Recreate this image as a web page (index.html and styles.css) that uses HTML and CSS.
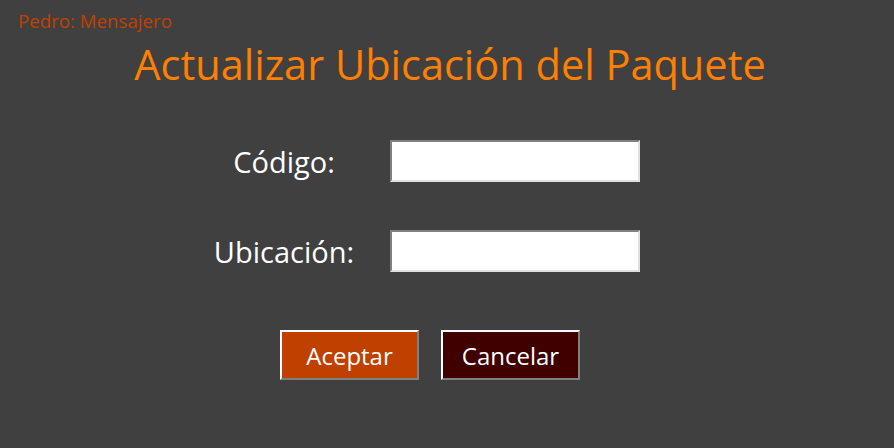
FILE: index.html
```html
<!DOCTYPE html>
<html lang="es">
<head>
<meta charset="utf-8">
<title>Actualizar Ubicación del Paquete</title>
<link rel="stylesheet" href="styles.css">
</head>
<body>
<div class="page">
  <div class="user">Pedro: Mensajero</div>
  <h1 class="title">Actualizar Ubicación del Paquete</h1>
  <form class="form">
    <label class="label" for="codigo">Código:</label>
    <input class="field" id="codigo" type="text">
    <label class="label" for="ubicacion">Ubicación:</label>
    <input class="field" id="ubicacion" type="text">
  </form>
  <div class="actions">
    <button class="btn btn-ok" type="button">Aceptar</button>
    <button class="btn btn-cancel" type="button">Cancelar</button>
  </div>
</div>
</body>
</html>
```

FILE: styles.css
```css
html, body {
  margin: 0;
  padding: 0;
  background: #404040;
  height: 100%;
}
.page {
  font-family: "Open Sans", "Lato", sans-serif;
  display: flex;
  flex-direction: column;
  padding-top: 10px;
}
.user {
  color: #c04000;
  font-size: 18.7px;
  line-height: 22px;
  padding-left: 18px;
}
.title {
  margin: 7px 0 0 0;
  color: #ff7f00;
  font-weight: normal;
  font-size: 41.5px;
  line-height: 50px;
  text-align: center;
  padding-left: 6px;
}
.form {
  margin: 51px 0 0 0;
  padding-left: 198px;
  display: grid;
  grid-template-columns: 172px 250px;
  column-gap: 20px;
  row-gap: 48px;
  align-items: center;
}
.label {
  color: #ffffff;
  font-size: 29px;
  text-align: center;
}
.field {
  box-sizing: border-box;
  width: 250px;
  height: 42px;
  margin: 0;
  background: #ffffff;
  border: 2px solid;
  border-top-color: #808080;
  border-left-color: #808080;
  border-bottom-color: #e0e0e0;
  border-right-color: #e0e0e0;
}
.actions {
  margin-top: 58px;
  padding-left: 280px;
  display: flex;
  gap: 22px;
}
.btn {
  box-sizing: border-box;
  width: 139px;
  height: 50px;
  font-family: inherit;
  font-size: 24px;
  color: #ffffff;
  border: 2px solid;
  border-top-color: #ffffff;
  border-left-color: #ffffff;
  border-bottom-color: #808080;
  border-right-color: #808080;
  padding: 0;
}
.btn-ok { background: #c04000; }
.btn-cancel { background: #400000; }
```
